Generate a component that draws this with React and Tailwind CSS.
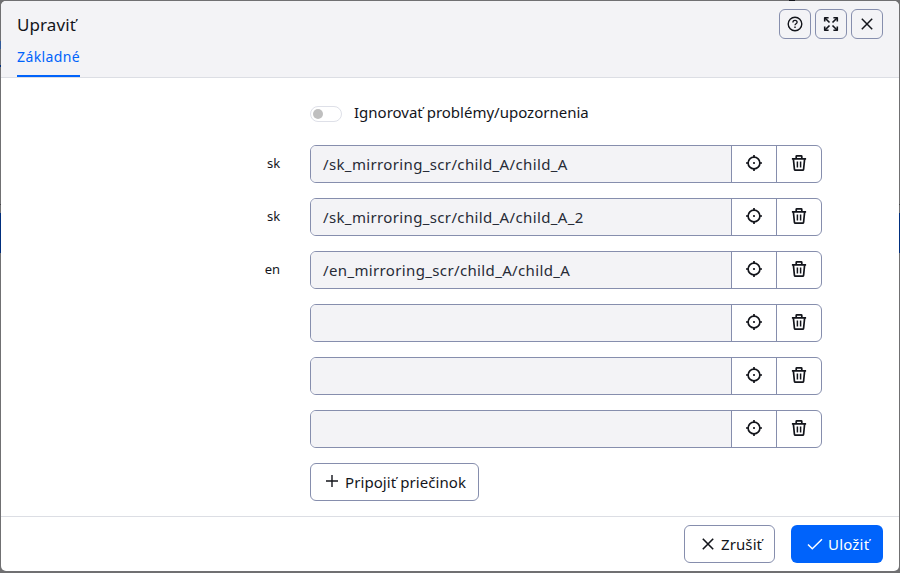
import React from 'react';

const rows = [
  { label: 'sk', path: '/sk_mirroring_scr/child_A/child_A' },
  { label: 'sk', path: '/sk_mirroring_scr/child_A/child_A_2' },
  { label: 'en', path: '/en_mirroring_scr/child_A/child_A' },
  { label: '', path: '' },
  { label: '', path: '' },
  { label: '', path: '' },
];

function Icon({ width = 1.5, children }) {
  return (
    <svg
      width="16"
      height="16"
      viewBox="0 0 16 16"
      fill="none"
      stroke="currentColor"
      strokeWidth={width}
      strokeLinejoin="round"
      className="shrink-0"
    >
      {children}
    </svg>
  );
}

const Help = () => (
  <Icon width={1.4}>
    <circle cx="8" cy="8" r="6.8" />
    <path d="M5.9 6.4C5.9 5 6.8 4.3 8 4.3s2.1.8 2.1 1.9c0 1.5-2.1 1.6-2.1 3.1" strokeWidth="1.3" />
    <path d="M8 10.5v1.5" />
  </Icon>
);

const Expand = () => (
  <Icon width={1.6}>
    <path d="M1.7 5.6V1.7h3.9M10.4 1.7h3.9v3.9M14.3 10.4v3.9h-3.9M5.6 14.3H1.7v-3.9" />
    <path d="M2 2l4.5 4.5M14 2L9.5 6.5M14 14l-4.5-4.5M2 14l4.5-4.5" />
  </Icon>
);

const Cross = ({ width = 1.5 }) => (
  <Icon width={width}>
    <path d="M2.8 2.8l10.4 10.4M13.2 2.8L2.8 13.2" />
  </Icon>
);

const Target = () => (
  <Icon width={1.7}>
    <circle cx="8" cy="8" r="5.9" />
    <path d="M8 0v3M8 13v3M0 8h3M13 8h3" />
    <circle cx="8" cy="8" r="1.1" fill="currentColor" stroke="none" />
  </Icon>
);

const Trash = () => (
  <Icon width={1.7}>
    <path d="M.9 3.9h14.2M5.2 3.7V1.5q0-.6.6-.6h4.4q.6 0 .6.6v2.2" />
    <path d="M2.4 4.1l1 10.1q.1 1 1 1h7.2q.9 0 1-1l1-10.1" />
    <path d="M6.4 6.5v6M9.6 6.5v6" strokeWidth="1.5" />
  </Icon>
);

const Plus = () => (
  <Icon width={1.4}>
    <path d="M8 2v12M2 8h12" />
  </Icon>
);

const Check = () => (
  <Icon width={1.5}>
    <path d="M1 8.4l4.3 4.4L15 3.2" strokeLinejoin="miter" />
  </Icon>
);

function HeaderButton({ children }) {
  return (
    <button className="flex h-[30px] w-8 items-center justify-center rounded-md border border-[#868ead]">
      {children}
    </button>
  );
}

function FolderRow({ label, path }) {
  return (
    <div className="flex h-[38px]">
      <label className="w-[279px] pt-[9px] text-right text-[13px] leading-[18px] tracking-[-0.1px]">{label}</label>
      <div className="ml-[30px] flex w-[512px] overflow-hidden rounded-md border border-[#868ead]">
        <div className="flex-1 bg-[#f3f3f6] pl-3 text-[15px] leading-[37px] tracking-[0.36px] text-[#272b36]">
          {path}
        </div>
        <button className="flex w-[45px] justify-center border-l border-[#868ead] pt-[9px]">
          <Target />
        </button>
        <button className="flex w-[45px] justify-center border-l border-[#868ead] pt-[9px]">
          <Trash />
        </button>
      </div>
    </div>
  );
}

export default function App() {
  return (
    <div className="relative h-[573px] w-[900px] overflow-hidden bg-[#707072] p-px pb-0.5 font-['Noto_Sans','Open_Sans',sans-serif] text-[#13151b]">
      <div className="absolute left-0 top-[213px] h-10 w-full bg-[#002e7d]" />
      <div className="absolute left-0 top-[204px] h-px w-full bg-[#47484c]" />
      <div className="absolute left-0 top-[41px] h-2 w-px bg-[#305999]" />
      <div className="absolute left-0 top-[65px] h-0.5 w-px bg-[#002e7d]" />
      <div className="absolute left-[789px] top-0 h-px w-[6px] bg-[#13151b]" />
      <div className="relative flex h-[570px] w-[898px] flex-col overflow-hidden rounded-[5px] bg-white">
        <header className="flex h-[77px] shrink-0 justify-between border-b border-[#dcdee4] bg-[#f3f3f6] pl-4 pr-4">
          <div className="flex flex-col items-start">
            <h1 className="mt-[11px] h-[26px] text-[17px] leading-[26px] tracking-[0.1px]">Upraviť</h1>
            <div className="mt-2 h-[31px] border-b-2 border-[#0063fb] text-[14px] leading-[22px] tracking-[0.4px] text-[#0063fb]">
              Základné
            </div>
          </div>
          <div className="mt-2 flex gap-1">
            <HeaderButton><Help /></HeaderButton>
            <HeaderButton><Expand /></HeaderButton>
            <HeaderButton><Cross /></HeaderButton>
          </div>
        </header>
        <main className="h-[438px] shrink-0">
          <div className="flex h-[67px] pl-[309px] pt-7">
            <div className="flex h-4 w-8 items-center rounded-full border border-[#dee0e8] pl-[2px]">
              <div className="size-[10px] rounded-full bg-[#bfbfbf]" />
            </div>
            <span className="-mt-1.5 ml-3 text-[15px] leading-6">Ignorovať problémy/upozornenia</span>
          </div>
          <div className="flex flex-col gap-[15px]">
            {rows.map((r, i) => (
              <FolderRow key={i} label={r.label} path={r.path} />
            ))}
          </div>
          <button className="ml-[309px] mt-[15px] flex h-[38px] w-[169px] rounded-md border border-[#868ead] pl-[13px] pt-2 text-[15px]">
            <span className="pt-px"><Plus /></span>
            <span className="ml-[5px] whitespace-nowrap leading-5 tracking-[0.08px]">Pripojiť priečinok</span>
          </button>
        </main>
        <footer className="flex flex-1 justify-end gap-4 border-t border-[#dcdee4] pr-4 pt-2 text-[15px]">
          <button className="flex h-[38px] w-[91px] items-center rounded-md border border-[#868ead] pl-[15px]">
            <Cross width={1.6} />
            <span className="ml-[5px] tracking-[0.1px]">Zrušiť</span>
          </button>
          <button className="flex h-[38px] w-[92px] items-center rounded-md bg-[#0063fb] pl-4 text-white">
            <Check />
            <span className="ml-[5px] tracking-[0.2px]">Uložiť</span>
          </button>
        </footer>
      </div>
    </div>
  );
}
